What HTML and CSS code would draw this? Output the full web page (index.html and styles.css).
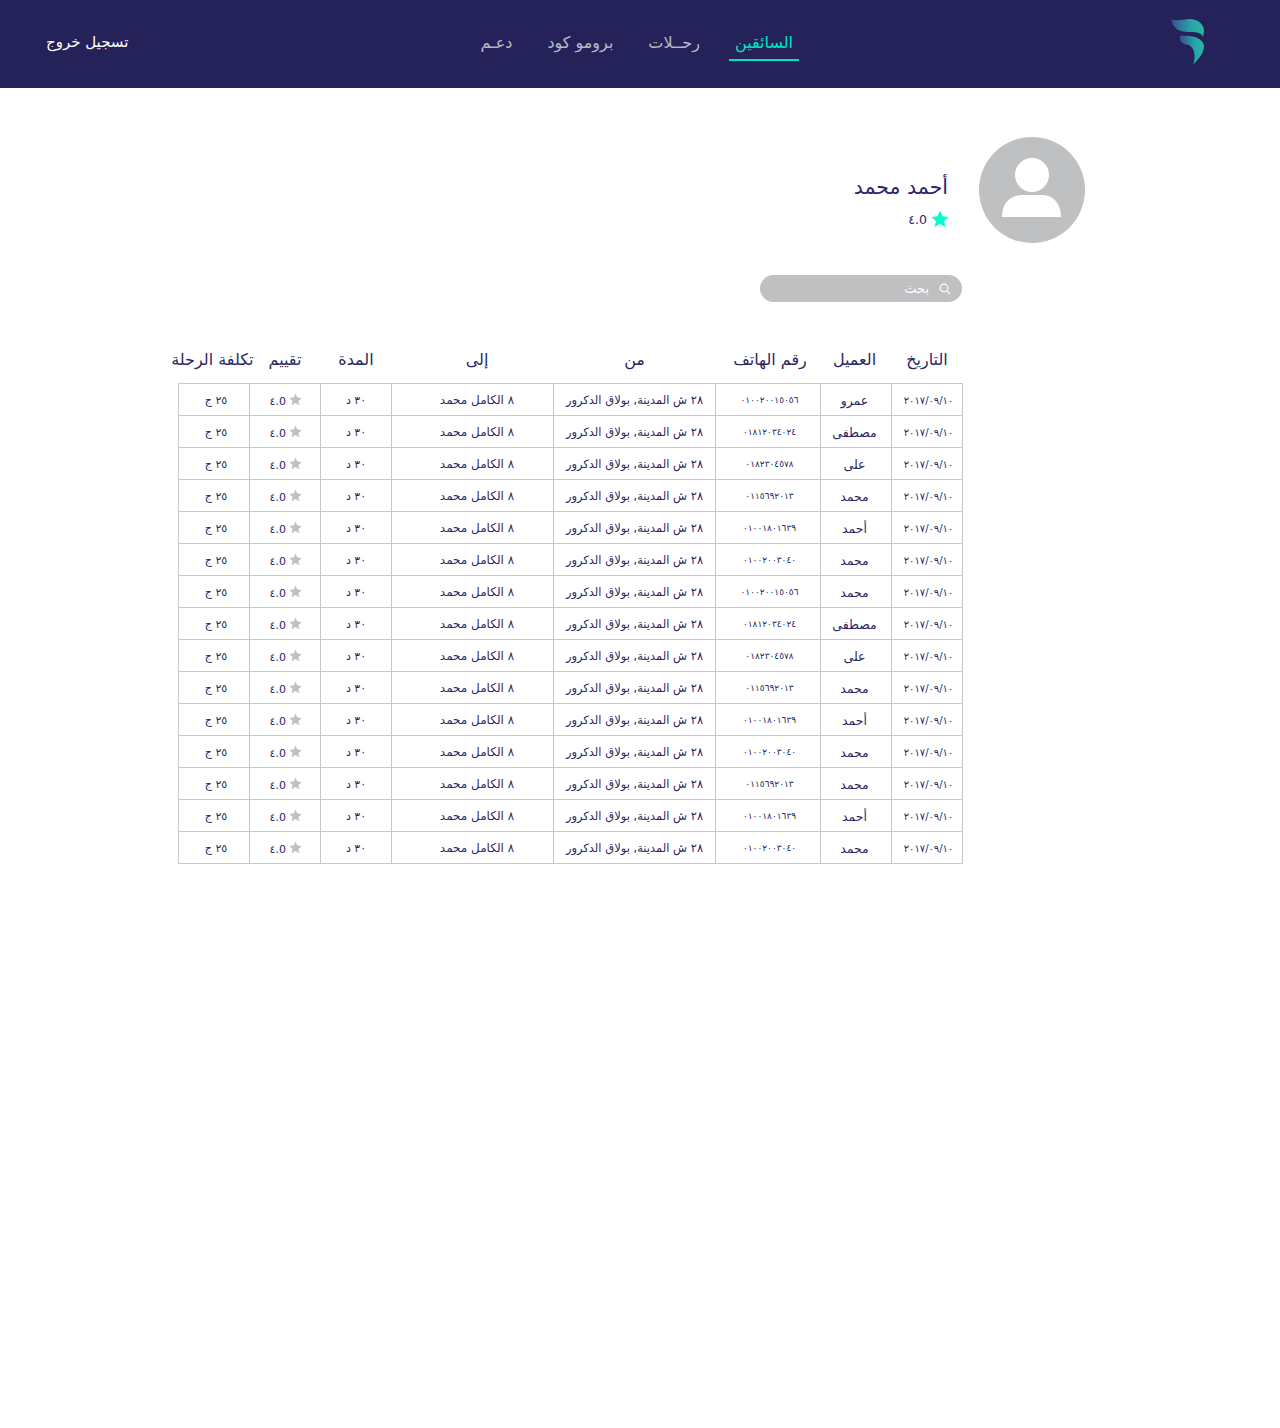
FILE: index.html
```html
<!DOCTYPE html>
<html lang="ar" dir="rtl">

<head>
    <meta charset="UTF-8">
    <title>السائقين</title>
    <link rel="stylesheet" href="styles.css">
</head>

<body>

    <svg class="defs" width="0" height="0">
        <symbol id="star" viewBox="0 0 24 24"><path d="M12 1 L15.4 8.3 L23.4 9.2 L17.5 14.6 L19.1 22.5 L12 18.5 L4.9 22.5 L6.5 14.6 L0.6 9.2 L8.6 8.3 Z"/></symbol>
    </svg>

    <header class="topbar">
        <svg class="logo" width="34" height="48" viewBox="0 0 34 48">
            <defs>
                <linearGradient id="logoGrad" x1="0" y1="0" x2="1" y2="0">
                    <stop offset="0" stop-color="#3a4f93"/>
                    <stop offset="0.6" stop-color="#27a3a6"/>
                    <stop offset="1" stop-color="#2bb5a5"/>
                </linearGradient>
            </defs>
            <path d="M0 1 C6 4 12 1 19 1 C27 1 33 6 33 13 L32 19 C31 15 26 14 19 14 C11 14 3 13 0 1 Z" fill="url(#logoGrad)"/>
            <path d="M9 18 C16 17 32 18 33 28 C33 36 27 41 22 47 C25 38 24 31 18 27 C13 26 8 25 9 18 Z" fill="url(#logoGrad)"/>
        </svg>
        <nav class="nav">
            <a class="nav-link active" href="#">السائقين</a>
            <a class="nav-link" href="#">رحــلات</a>
            <a class="nav-link" href="#">برومو كود</a>
            <a class="nav-link" href="#">دعـم</a>
        </nav>
        <a class="logout" href="#">تسجيل خروج</a>
    </header>

    <main class="content">
        <section class="profile">
            <svg class="avatar" width="106" height="106" viewBox="0 0 106 106">
                <circle cx="53" cy="53" r="53" fill="#bfc0c2"/>
                <circle cx="53" cy="38" r="17" fill="#fff"/>
                <path d="M23 80 C23 66 32 58 43 58 L63 58 C74 58 82 66 82 80 Z" fill="#fff"/>
            </svg>
            <div class="profile-info">
                <h1 class="driver-name">أحمد محمد</h1>
                <div class="driver-rate">
                    <svg class="star" width="18" height="18"><use href="#star"/></svg>
                    <span class="num">٤.0</span>
                </div>
            </div>
        </section>

        <form class="search">
            <svg width="12" height="12" viewBox="0 0 12 12" fill="none" stroke="#fff" stroke-width="1.2"><circle cx="5" cy="5" r="3.8"/><path d="M8 8 L11.2 11.2"/></svg>
            <span class="search-text">بحث</span>
        </form>

        <table class="trips">
            <colgroup>
                <col class="c-small"><col class="c-small"><col class="c-phone"><col class="c-place"><col class="c-place"><col class="c-small"><col class="c-small"><col class="c-small">
            </colgroup>
            <thead>
                <tr>
                    <th>التاريخ</th>
                    <th>العميل</th>
                    <th>رقم الهاتف</th>
                    <th>من</th>
                    <th>إلى</th>
                    <th>المدة</th>
                    <th>تقييم</th>
                    <th>تكلفة الرحلة</th>
                </tr>
            </thead>
            <tbody>
                <tr><td>٢٠١٧/٠٩/١٠</td><td>عمرو</td><td>٠١٠٠٢٠٠١٥٠٥٦</td><td>٢٨ ش المدينة, بولاق الدكرور</td><td>٨ الكامل محمد</td><td>٣٠ د</td><td><svg class="star small"><use href="#star"/></svg> <span class="num">٤.0</span></td><td>٢٥ ج</td></tr>
                <tr><td>٢٠١٧/٠٩/١٠</td><td>مصطفى</td><td>٠١٨١٢٠٣٤٠٢٤</td><td>٢٨ ش المدينة, بولاق الدكرور</td><td>٨ الكامل محمد</td><td>٣٠ د</td><td><svg class="star small"><use href="#star"/></svg> <span class="num">٤.0</span></td><td>٢٥ ج</td></tr>
                <tr><td>٢٠١٧/٠٩/١٠</td><td>على</td><td>٠١٨٢٣٠٤٥٧٨</td><td>٢٨ ش المدينة, بولاق الدكرور</td><td>٨ الكامل محمد</td><td>٣٠ د</td><td><svg class="star small"><use href="#star"/></svg> <span class="num">٤.0</span></td><td>٢٥ ج</td></tr>
                <tr><td>٢٠١٧/٠٩/١٠</td><td>محمد</td><td>٠١١٥٦٩٢٠١٣</td><td>٢٨ ش المدينة, بولاق الدكرور</td><td>٨ الكامل محمد</td><td>٣٠ د</td><td><svg class="star small"><use href="#star"/></svg> <span class="num">٤.0</span></td><td>٢٥ ج</td></tr>
                <tr><td>٢٠١٧/٠٩/١٠</td><td>أحمد</td><td>٠١٠٠١٨٠١٦٣٩</td><td>٢٨ ش المدينة, بولاق الدكرور</td><td>٨ الكامل محمد</td><td>٣٠ د</td><td><svg class="star small"><use href="#star"/></svg> <span class="num">٤.0</span></td><td>٢٥ ج</td></tr>
                <tr><td>٢٠١٧/٠٩/١٠</td><td>محمد</td><td>٠١٠٠٢٠٠٣٠٤٠</td><td>٢٨ ش المدينة, بولاق الدكرور</td><td>٨ الكامل محمد</td><td>٣٠ د</td><td><svg class="star small"><use href="#star"/></svg> <span class="num">٤.0</span></td><td>٢٥ ج</td></tr>
                <tr><td>٢٠١٧/٠٩/١٠</td><td>محمد</td><td>٠١٠٠٢٠٠١٥٠٥٦</td><td>٢٨ ش المدينة, بولاق الدكرور</td><td>٨ الكامل محمد</td><td>٣٠ د</td><td><svg class="star small"><use href="#star"/></svg> <span class="num">٤.0</span></td><td>٢٥ ج</td></tr>
                <tr><td>٢٠١٧/٠٩/١٠</td><td>مصطفى</td><td>٠١٨١٢٠٣٤٠٢٤</td><td>٢٨ ش المدينة, بولاق الدكرور</td><td>٨ الكامل محمد</td><td>٣٠ د</td><td><svg class="star small"><use href="#star"/></svg> <span class="num">٤.0</span></td><td>٢٥ ج</td></tr>
                <tr><td>٢٠١٧/٠٩/١٠</td><td>على</td><td>٠١٨٢٣٠٤٥٧٨</td><td>٢٨ ش المدينة, بولاق الدكرور</td><td>٨ الكامل محمد</td><td>٣٠ د</td><td><svg class="star small"><use href="#star"/></svg> <span class="num">٤.0</span></td><td>٢٥ ج</td></tr>
                <tr><td>٢٠١٧/٠٩/١٠</td><td>محمد</td><td>٠١١٥٦٩٢٠١٣</td><td>٢٨ ش المدينة, بولاق الدكرور</td><td>٨ الكامل محمد</td><td>٣٠ د</td><td><svg class="star small"><use href="#star"/></svg> <span class="num">٤.0</span></td><td>٢٥ ج</td></tr>
                <tr><td>٢٠١٧/٠٩/١٠</td><td>أحمد</td><td>٠١٠٠١٨٠١٦٣٩</td><td>٢٨ ش المدينة, بولاق الدكرور</td><td>٨ الكامل محمد</td><td>٣٠ د</td><td><svg class="star small"><use href="#star"/></svg> <span class="num">٤.0</span></td><td>٢٥ ج</td></tr>
                <tr><td>٢٠١٧/٠٩/١٠</td><td>محمد</td><td>٠١٠٠٢٠٠٣٠٤٠</td><td>٢٨ ش المدينة, بولاق الدكرور</td><td>٨ الكامل محمد</td><td>٣٠ د</td><td><svg class="star small"><use href="#star"/></svg> <span class="num">٤.0</span></td><td>٢٥ ج</td></tr>
                <tr><td>٢٠١٧/٠٩/١٠</td><td>محمد</td><td>٠١١٥٦٩٢٠١٣</td><td>٢٨ ش المدينة, بولاق الدكرور</td><td>٨ الكامل محمد</td><td>٣٠ د</td><td><svg class="star small"><use href="#star"/></svg> <span class="num">٤.0</span></td><td>٢٥ ج</td></tr>
                <tr><td>٢٠١٧/٠٩/١٠</td><td>أحمد</td><td>٠١٠٠١٨٠١٦٣٩</td><td>٢٨ ش المدينة, بولاق الدكرور</td><td>٨ الكامل محمد</td><td>٣٠ د</td><td><svg class="star small"><use href="#star"/></svg> <span class="num">٤.0</span></td><td>٢٥ ج</td></tr>
                <tr><td>٢٠١٧/٠٩/١٠</td><td>محمد</td><td>٠١٠٠٢٠٠٣٠٤٠</td><td>٢٨ ش المدينة, بولاق الدكرور</td><td>٨ الكامل محمد</td><td>٣٠ د</td><td><svg class="star small"><use href="#star"/></svg> <span class="num">٤.0</span></td><td>٢٥ ج</td></tr>
            </tbody>
        </table>
    </main>

</body>

</html>
```

FILE: styles.css
```css
* {
    box-sizing: border-box;
    margin: 0;
    padding: 0;
}

body {
    background-color: #fff;
    color: #2a2864;
    font-family: "DejaVu Sans", "Noto Sans", sans-serif;
}

a {
    text-decoration: none;
}

.defs {
    display: block;
}

.topbar {
    background-color: #25225a;
    height: 88px;
    display: flex;
    align-items: center;
    padding: 0 75px 0 46px;
}

.logo {
    margin-top: -4px;
    margin-left: 372px;
}

.nav {
    display: flex;
    gap: 23px;
    flex: 1;
}

.nav-link {
    color: #b9b9c6;
    font-size: 16px;
    height: 33px;
    line-height: 30px;
    padding: 0 6px;
    border-bottom: 2px solid transparent;
}

.nav-link.active {
    color: #00e6c4;
    border-bottom-color: #00e6c4;
}

.logout {
    color: #fff;
    font-size: 15px;
    margin-top: -4px;
}

.content {
    padding: 49px 195px 0 0;
}

.profile {
    display: flex;
    align-items: center;
    gap: 31px;
}

.profile-info {
    padding-top: 23px;
}

.driver-name {
    font-size: 20.5px;
    font-weight: normal;
}

.driver-rate {
    display: flex;
    align-items: center;
    gap: 4px;
    font-size: 12.5px;
    margin-top: 11px;
}

.num {
    direction: ltr;
    unicode-bidi: isolate;
}

.star {
    fill: #00ffcf;
    margin-right: -1px;
}

.star.small {
    fill: #c1c1c3;
    width: 13px;
    height: 13px;
    margin-right: 0;
    vertical-align: -1px;
}

.search {
    width: 202px;
    height: 27px;
    margin: 32px 123px 0 0;
    border-radius: 14px;
    background-color: #bfc0c2;
    display: flex;
    align-items: center;
    gap: 10px;
    padding: 0 11px;
}

.search-text {
    color: #fff;
    font-size: 13px;
}

.trips {
    width: 785px;
    margin: 39px 122px 0 0;
    table-layout: fixed;
    border-collapse: collapse;
}

.c-small {
    width: 71px;
}

.c-phone {
    width: 105px;
}

.c-place {
    width: 162px;
}

.trips th {
    height: 42px;
    padding-bottom: 4px;
    font-size: 16px;
    font-weight: normal;
    white-space: nowrap;
    border-bottom: 1px solid #c8c8ca;
}

.trips th:nth-child(2) {
    padding-right: 3px;
}

.trips th:nth-child(3) {
    padding-left: 4px;
}

.trips th:nth-child(5) {
    padding-left: 9px;
}

.trips th:nth-child(8) {
    text-indent: -4px;
}

.trips td {
    height: 32px;
    padding-top: 2px;
    font-size: 11.5px;
    text-align: center;
    white-space: nowrap;
    border: 1px solid #c8c8ca;
}

.trips td:nth-child(1) {
    font-size: 10px;
    padding-left: 3px;
}

.trips td:nth-child(2) {
    font-size: 12.5px;
    padding-right: 3px;
}

.trips td:nth-child(3) {
    font-size: 9px;
    padding-left: 3px;
}

.trips td:nth-child(5) {
    font-size: 12px;
    padding-left: 9px;
}

.trips td:nth-child(6),
.trips td:nth-child(7),
.trips td:nth-child(8) {
    font-size: 11px;
}

.trips td:nth-child(7) {
    padding-left: 2px;
}

.trips td:nth-child(8) {
    padding-left: 4px;
}
```
